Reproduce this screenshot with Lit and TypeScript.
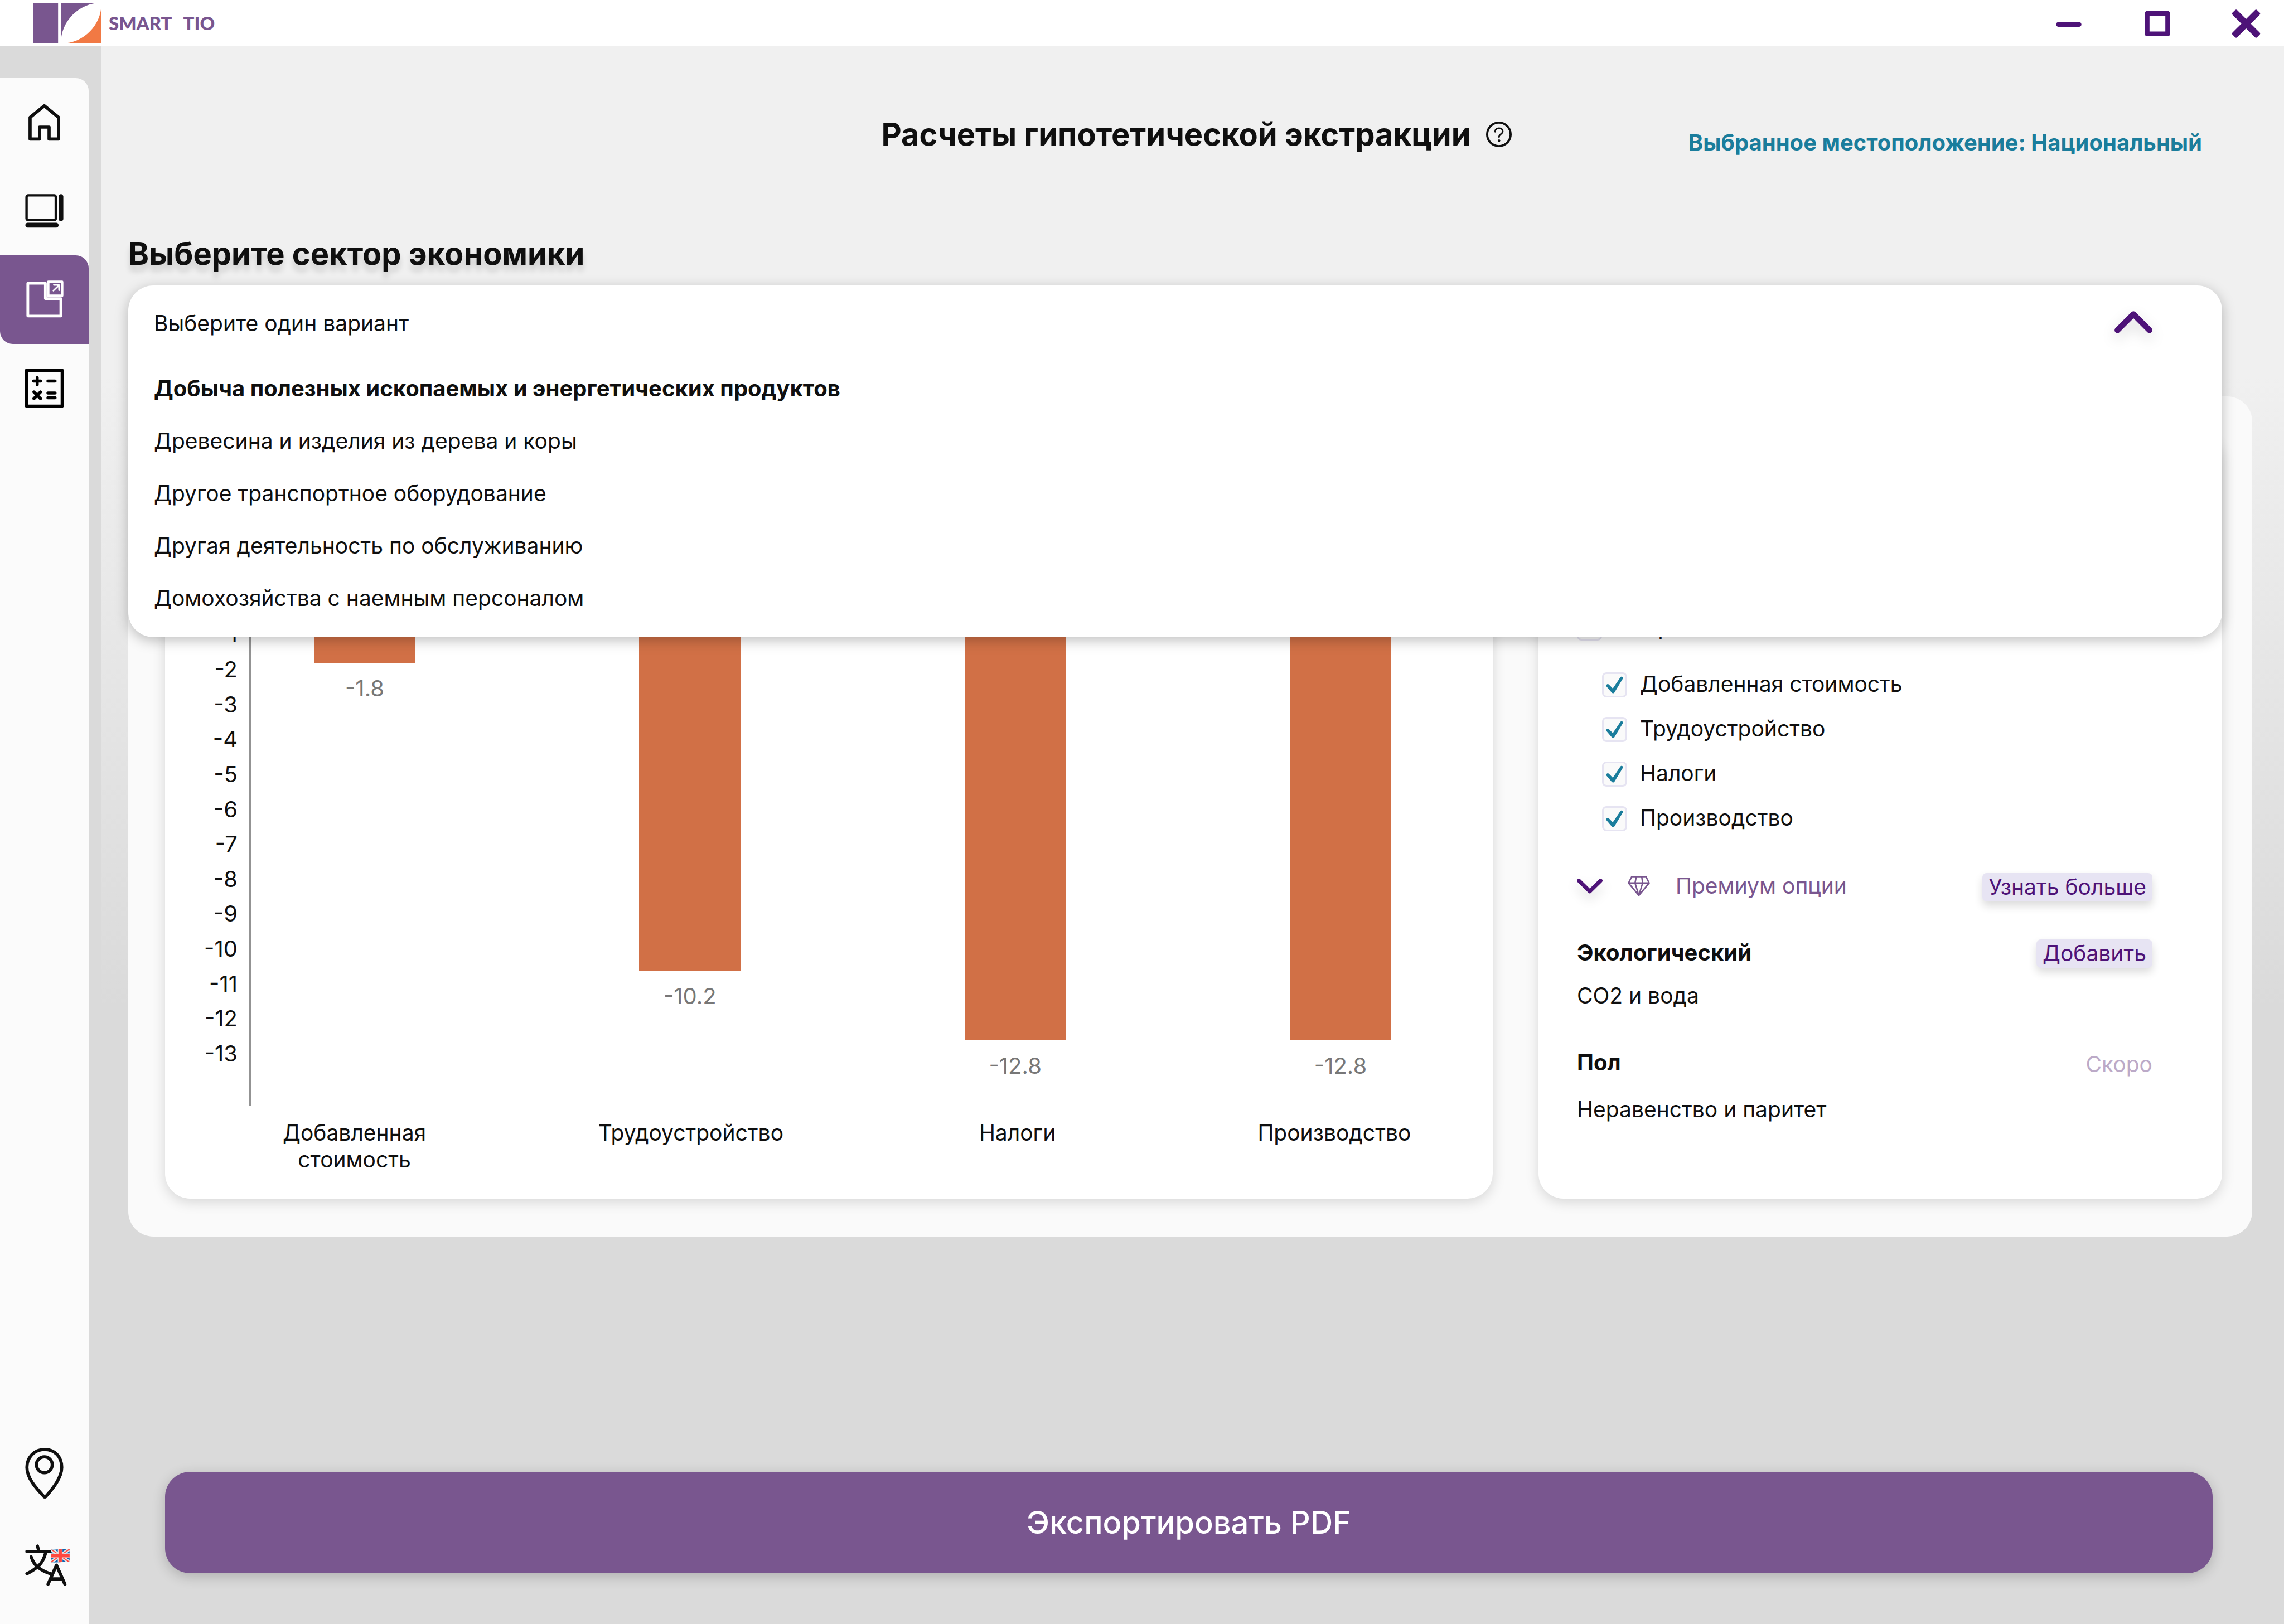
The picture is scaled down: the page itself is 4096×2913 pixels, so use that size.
import { LitElement, html, css, svg } from "lit";
import { customElement, state } from "lit/decorators.js";

const NAV_ICONS = {
  home: svg`<path d="M84 52.5 57 74.5V115.5H75V93H93V115.5H111V74.5Z" fill="none" stroke="#0f0f0f" stroke-width="6" stroke-linejoin="round"/>`,
  screen: svg`
    <rect x="50.3" y="54.3" width="55.4" height="46.8" rx="3" fill="none" stroke="#0f0f0f" stroke-width="4.6"/>
    <rect x="111" y="52" width="9" height="51.3" rx="4.5" fill="#0f0f0f"/>
    <rect x="48" y="106.3" width="63" height="9.2" rx="4.5" fill="#0f0f0f"/>`,
  extract: svg`
    <g fill="none" stroke="#fff" stroke-linejoin="round" stroke-linecap="round">
      <path d="M52.7 53H86V82H115.3V115H52.7Z" stroke-width="5.2"/>
      <rect x="91.4" y="50.2" width="26.4" height="26.2" stroke-width="4.6"/>
      <path d="M101.2 66.8 111.4 57M102 56H111.6L112 66" stroke-width="3"/>
    </g>`,
  calc: svg`
    <g fill="none" stroke="#000" stroke-width="5.8" stroke-linecap="round" stroke-linejoin="round">
      <rect x="50.2" y="49.9" width="67.6" height="67.8"/>
      <path d="M63.9 70.3H77.1M70.5 63.9V77.1M90.9 70.3H104.3M64.3 91.1 76.7 103.5M76.7 91.1 64.3 103.5M90.9 93H104.3M90.9 102H104.3"/>
    </g>`,
  pin: svg`
    <g fill="none" stroke="#0f0f0f" stroke-width="6" stroke-linejoin="round">
      <path d="M84.5 39C65 39 51 54 51 73 51 93 67 111 83 128Q85 130 87 128C101 112 117 92 117 73 117 53 104 39 84.5 39Z"/>
      <circle cx="84" cy="68" r="15"/>
    </g>`,
  language: svg`
    <g fill="none" stroke="#0f0f0f" stroke-width="6" stroke-linecap="round" stroke-linejoin="round">
      <path d="M51 58H97M71 47.8 73.2 56M59 68C62 77 66 83 71 87 78 93.5 87 97.5 97.5 101M86.7 60C83.5 72 79 81 71 87 65 92.5 58.5 96.5 51 100.2"/>
      <path d="M91 120.2 107 84 123 120.2M97 110H117"/>
    </g>
    <clipPath id="wave"><path d="M96 54.5Q103 55.2 110 54 120 52.4 132 53V77.8Q125 77 118 78 106 79.6 96 78.6Z"/></clipPath>
    <g clip-path="url(#wave)">
      <rect x="96" y="52" width="36" height="28" fill="#0c64b0"/>
      <path d="M94 52 134 80M134 52 94 80" stroke="#e6e7e8" stroke-width="6.6"/>
      <path d="M94 52 134 80M134 52 94 80" stroke="#ff473e" stroke-width="2"/>
      <path d="M114 50V82M94 66H134" stroke="#e6e7e8" stroke-width="9"/>
      <path d="M114 50V82M94 66H134" stroke="#ff473e" stroke-width="6.4"/>
    </g>`,
};

@customElement("nav-item")
class NavItem extends LitElement {
  static properties = {
    icon: { type: String },
    label: { type: String },
    active: { type: Boolean },
  };
  declare icon: keyof typeof NAV_ICONS;
  declare label: string;
  declare active: boolean;

  static styles = css`
    :host { display: block; }
    .item {
      display: block;
      width: 100%;
      padding: 0;
      border: 0;
      background: none;
      cursor: pointer;
    }
    .active {
      background: #79568f;
      border-radius: 0 23px 0 23px;
    }
    svg { display: block; width: 100%; }
  `;

  render() {
    return html`
      <button class="item ${this.active ? "active" : ""}" aria-label=${this.label}>
        <svg viewBox="0 0 168 168" aria-hidden="true">${NAV_ICONS[this.icon]}</svg>
      </button>`;
  }
}

@customElement("title-bar")
class TitleBar extends LitElement {
  static styles = css`
    :host {
      display: flex;
      align-items: center;
      justify-content: space-between;
      height: 82px;
      padding: 0 42px 0 60px;
      background: #fff;
    }
    .brand {
      display: flex;
      align-items: center;
      gap: 13px;
    }
    .logo { width: 122px; height: 73px; }
    .name {
      display: flex;
      gap: 20px;
      font: 900 33px/48px Lato, "Open Sans", sans-serif;
      color: #79568f;
    }
    .controls { display: flex; gap: 107px; }
    .control {
      width: 52px;
      height: 52px;
      padding: 0;
      border: 0;
      background: none;
    }
    .control svg {
      display: block;
      width: 52px;
      height: 52px;
      overflow: visible;
    }
  `;

  render() {
    return html`
      <div class="brand">
        <svg class="logo" viewBox="0 0 129 77" aria-hidden="true">
          <path fill="#79568f" d="M0 0H46.7V77H0ZM52 0H127C88 0 52 34 52 76Z"/>
          <path fill="#f17944" d="M128.7 3V77H53C97 77 128.7 40 128.7 3Z"/>
        </svg>
        <div class="name"><span>SMART</span> <span>TIO</span></div>
      </div>
      <div class="controls">
        <button class="control" aria-label="Свернуть">
          <svg viewBox="0 0 55 55"><rect x="3.5" y="26" width="48" height="9" rx="4.5" fill="#4e1378"/></svg>
        </button>
        <button class="control" aria-label="Развернуть">
          <svg viewBox="0 0 55 55"><rect x="8" y="9.5" width="39" height="39" fill="none" stroke="#4e1378" stroke-width="9" stroke-linejoin="round"/></svg>
        </button>
        <button class="control" aria-label="Закрыть">
          <svg viewBox="0 0 55 55">
            <g fill="#4e1378" transform="translate(27.5 29)">
              <rect x="-33" y="-6.3" width="66" height="12.6" rx="3" transform="rotate(45)"/>
              <rect x="-33" y="-6.3" width="66" height="12.6" rx="3" transform="rotate(-45)"/>
            </g>
          </svg>
        </button>
      </div>`;
  }
}

@customElement("sector-select")
class SectorSelect extends LitElement {
  private options = [
    "Добыча полезных ископаемых и энергетических продуктов",
    "Древесина и изделия из дерева и коры",
    "Другое транспортное оборудование",
    "Другая деятельность по обслуживанию",
    "Домохозяйства с наемным персоналом",
  ];

  @state() private selected = 0;

  static styles = css`
    :host {
      display: block;
      position: relative;
      height: 136px;
      z-index: 2;
    }
    .menu {
      position: absolute;
      top: 0;
      left: 0;
      right: 0;
      box-sizing: border-box;
      padding: 44px 125px 46px 46px;
      border-radius: 45px;
      background: #fff;
      box-shadow: 0 6px 23px rgba(0, 0, 0, 0.25);
    }
    .head {
      display: flex;
      align-items: center;
      justify-content: space-between;
      width: 100%;
      padding: 0;
      border: 0;
      background: none;
      font: inherit;
      color: inherit;
      text-align: left;
    }
    .chevron {
      width: 68px;
      height: 48px;
      overflow: visible;
      filter: drop-shadow(0 10px 12px rgba(0, 0, 0, 0.16));
    }
    .options {
      display: flex;
      flex-direction: column;
      gap: 46px;
      margin: 69px 0 0;
      padding: 0;
      list-style: none;
    }
    .selected {
      font-size: 40px;
      font-weight: 700;
    }
  `;

  render() {
    return html`
      <div class="menu">
        <button class="head" aria-haspopup="listbox" aria-expanded="true">
          <span>Выберите один вариант</span>
          <svg class="chevron" viewBox="0 0 72 51" aria-hidden="true">
            <path d="M5.5 38.5 36 8 66.5 38.5" fill="none" stroke="#4e1378" stroke-width="11" stroke-linecap="round" stroke-linejoin="round"/>
          </svg>
        </button>
        <ul class="options" role="listbox">
          ${this.options.map((text, i) => html`
            <li
              role="option"
              class=${i === this.selected ? "selected" : ""}
              aria-selected=${i === this.selected}
              @click=${() => (this.selected = i)}
            >${text}</li>`)}
        </ul>
      </div>`;
  }
}

const TICK_COUNT = 13;
// Rows below the zero line, counting the half row of zero and the empty last row.
const ROWS_BELOW_ZERO = 14.5;

@customElement("impact-chart")
class ImpactChart extends LitElement {
  private ticks = Array.from({ length: TICK_COUNT }, (_, i) => -1 - i);
  private bars = [
    { name: "Добавленная стоимость", value: "-1.8", rows: 1.82 },
    { name: "Трудоустройство", value: "-10.2", rows: 10.62 },
    { name: "Налоги", value: "-12.8", rows: 12.61 },
    { name: "Производство", value: "-12.8", rows: 12.61 },
  ];

  static styles = css`
    :host { display: block; }
    .graph {
      display: grid;
      grid-template-columns: 151px 1fr;
      height: 1128px;
      font-size: 40px;
    }
    .ticks {
      display: grid;
      grid-template-rows: repeat(14, 1fr);
      align-items: center;
      padding: 251px 21px 0 0;
      text-align: right;
    }
    .plot {
      display: flex;
      justify-content: space-between;
      padding: 219px 182px 0 113px;
      border-left: 3px solid #939393;
    }
    .column {
      width: 182px;
      text-align: center;
      color: #777;
    }
    .bar { background: #d17046; }
    .value { margin-top: 22px; }
    .names {
      display: grid;
      grid-template-columns: 604fr 604fr 569fr 569fr;
      justify-items: center;
      margin-top: 24px;
      padding-left: 38px;
      text-align: center;
    }
    .name { max-width: 340px; }
  `;

  render() {
    return html`
      <div class="graph">
        <div class="ticks">${this.ticks.map((t) => html`<span>${t}</span>`)}</div>
        <div class="plot">
          ${this.bars.map((b) => html`
            <div class="column">
              <div class="bar" style="height:${(b.rows / ROWS_BELOW_ZERO) * 100}%"></div>
              <div class="value">${b.value}</div>
            </div>`)}
        </div>
      </div>
      <div class="names">
        ${this.bars.map((b) => html`<span class="name">${b.name}</span>`)}
      </div>`;
  }
}

@customElement("indicator-panel")
class IndicatorPanel extends LitElement {
  private indicators = ["Добавленная стоимость", "Трудоустройство", "Налоги", "Производство"];

  static styles = css`
    :host {
      display: flex;
      flex-direction: column;
      justify-content: flex-end;
    }
    .check {
      display: flex;
      align-items: flex-start;
      gap: 23px;
      line-height: 42px;
    }
    .box {
      display: grid;
      width: 45px;
      height: 45px;
    }
    .box input, .box svg {
      grid-area: 1 / 1;
      width: 45px;
      height: 45px;
    }
    .box input {
      appearance: none;
      box-sizing: border-box;
      margin: 0;
      border: 3px solid #e6e4f2;
      border-radius: 8px;
      background: #fafafa;
    }
    .box svg { pointer-events: none; visibility: hidden; }
    .box input:checked + svg { visibility: visible; }
    .children {
      display: flex;
      flex-direction: column;
      gap: 35px;
      margin: 57px 0 75px;
      padding-left: 45px;
    }
    .row {
      display: flex;
      justify-content: space-between;
      align-items: flex-start;
    }
    .premium { margin-bottom: 68px; }
    .toggle {
      display: flex;
      align-items: center;
      padding: 0;
      border: 0;
      background: none;
      font: inherit;
      line-height: 46px;
      color: #79568f;
    }
    .chevron {
      width: 46px;
      height: 27px;
      overflow: visible;
      filter: drop-shadow(0 10px 10px rgba(0, 0, 0, 0.16));
    }
    .gem {
      width: 40px;
      height: 37px;
      margin: 0 46px 0 45px;
    }
    .action {
      padding: 0 11px 2px;
      border: 0;
      border-radius: 8px;
      background: #e7e4f3;
      font: inherit;
      line-height: 49px;
      color: #4e1378;
      box-shadow: 0 8px 16px rgba(0, 0, 0, 0.14);
    }
    .soon {
      line-height: 54px;
      color: #bcaac8;
    }
    .title {
      margin: 0;
      font: inherit;
      font-size: 40px;
      font-weight: 700;
    }
    .text { margin: 26px 0 72px; }
    .last { margin: 30px 0 0; }
  `;

  private renderCheck(label: string, checked: boolean) {
    return html`
      <label class="check">
        <span class="box">
          <input type="checkbox" .checked=${checked} />
          <svg viewBox="0 0 48 48" aria-hidden="true">
            <path fill="#1a7d9c" d="M8.2 26.6C7.2 24 10.6 20.6 13 23.2L20.6 31 35 9.6C36.8 7 41.2 8.6 39.8 12L24.2 37.8C22.6 40.6 20 40.6 18.2 38.4Z"/>
          </svg>
        </span>
        <span>${label}</span>
      </label>`;
  }

  render() {
    return html`
      ${this.renderCheck("Выбрать все", false)}
      <div class="children">${this.indicators.map((name) => this.renderCheck(name, true))}</div>
      <div class="row premium">
        <button class="toggle">
          <svg class="chevron" viewBox="0 0 48 28" aria-hidden="true">
            <path d="M3.8 3.8 24 23.6 44.2 3.8" fill="none" stroke="#4e1378" stroke-width="7.4" stroke-linecap="round" stroke-linejoin="round"/>
          </svg>
          <svg class="gem" viewBox="0 0 42 39" aria-hidden="true">
            <path d="M7.6 1.5H34.4L40.5 13.6 21 37 1.5 13.6ZM1.5 13.6H40.5M16.2 1.5 13.8 13.6 21 37 28.2 13.6 26.4 1.5" fill="none" stroke="#79568f" stroke-width="2.7" stroke-linejoin="round"/>
          </svg>
          <span>Премиум опции</span>
        </button>
        <button class="action">Узнать больше</button>
      </div>
      <div class="row">
        <h3 class="title">Экологический</h3>
        <button class="action">Добавить</button>
      </div>
      <p class="text">СО2 и вода</p>
      <div class="row">
        <h3 class="title">Пол</h3>
        <span class="soon">Скоро</span>
      </div>
      <p class="text last">Неравенство и паритет</p>`;
  }
}

@customElement("app-root")
class AppRoot extends LitElement {
  static styles = css`
    :host {
      display: flex;
      flex-direction: column;
      min-height: 100vh;
      font: 400 39px/48px Inter, "Noto Sans", sans-serif;
      color: #0f0f0f;
      background: #dadada;
    }
    .body {
      display: grid;
      grid-template-columns: 159px 1fr;
      column-gap: 23px;
      flex: 1;
    }
    .side {
      display: flex;
      flex-direction: column;
      justify-content: space-between;
      margin-top: 58px;
      padding-bottom: 26px;
      border-radius: 0 23px 0 0;
      background: #fbfbfb;
    }
    .bottom {
      display: flex;
      flex-direction: column;
      gap: 6px;
    }
    .main {
      display: flex;
      flex-direction: column;
      padding: 125px 0 91px 48px;
      background: linear-gradient(#f0f0f0 21%, #dadada 61%);
    }
    .header {
      display: grid;
      grid-template-columns: 1fr auto 1fr;
      align-items: start;
      margin: 0 0 141px -35px;
    }
    .heading {
      display: flex;
      align-items: center;
      gap: 27px;
      grid-column: 2;
    }
    h1, h2 {
      margin: 0;
      font-weight: 700;
      font-size: 56px;
      line-height: 68px;
    }
    h2 {
      margin-bottom: 23px;
      text-shadow: 0 11px 11px rgba(0, 0, 0, 0.15);
    }
    .help {
      padding: 0;
      border: 0;
      background: none;
    }
    .help svg { display: block; width: 46px; height: 46px; }
    .location {
      padding: 25px 147px 0 0;
      font-size: 40px;
      font-weight: 700;
      text-align: right;
      white-space: nowrap;
      color: #1a7d9c;
    }
    .select { margin: 0 111px 63px 0; }
    .panel {
      display: grid;
      grid-template-columns: 2381fr 1226fr;
      gap: 82px;
      margin-right: 57px;
      padding: 68px 54px 68px 66px;
      border-radius: 45px;
      background: #fafafa;
    }
    .card {
      border-radius: 45px;
      background: #fff;
      box-shadow: 0 6px 23px rgba(0, 0, 0, 0.15);
    }
    .chart { padding: 77px 0 46px; }
    .indicators { padding: 0 125px 136px 69px; }
    .export {
      margin: auto 128px 0 66px;
      padding: 57px;
      border: 0;
      border-radius: 45px;
      background: #79568f;
      color: #fff;
      font: 500 56px/68px Inter, "Noto Sans", sans-serif;
      box-shadow: 0 6px 23px rgba(0, 0, 0, 0.2);
    }
  `;

  render() {
    return html`
      <title-bar></title-bar>
      <div class="body">
        <nav class="side">
          <div>
            <nav-item icon="home" label="Главная"></nav-item>
            <nav-item icon="screen" label="Обзор"></nav-item>
            <nav-item icon="extract" label="Экстракция" active></nav-item>
            <nav-item icon="calc" label="Расчеты"></nav-item>
          </div>
          <div class="bottom">
            <nav-item icon="pin" label="Местоположение"></nav-item>
            <nav-item icon="language" label="Язык"></nav-item>
          </div>
        </nav>
        <main class="main">
          <header class="header">
            <div class="heading">
              <h1>Расчеты гипотетической экстракции</h1>
              <button class="help" aria-label="Справка">
                <svg viewBox="0 0 48 48" aria-hidden="true">
                  <g fill="none" stroke="#0f0f0f" stroke-linecap="round">
                    <circle cx="24" cy="24" r="22" stroke-width="4"/>
                    <path d="M17 19C17 14.6 20.4 12.4 24.3 12.4 28.4 12.4 31.2 15.2 31.2 18.6 31.2 23.4 24.3 23.6 24.3 29" stroke-width="3"/>
                  </g>
                  <circle cx="24.3" cy="35.8" r="2.3" fill="#0f0f0f"/>
                </svg>
              </button>
            </div>
            <div class="location">Выбранное местоположение: Национальный</div>
          </header>
          <h2>Выберите сектор экономики</h2>
          <sector-select class="select"></sector-select>
          <section class="panel">
            <impact-chart class="card chart"></impact-chart>
            <indicator-panel class="card indicators"></indicator-panel>
          </section>
          <button class="export">Экспортировать PDF</button>
        </main>
      </div>`;
  }
}
